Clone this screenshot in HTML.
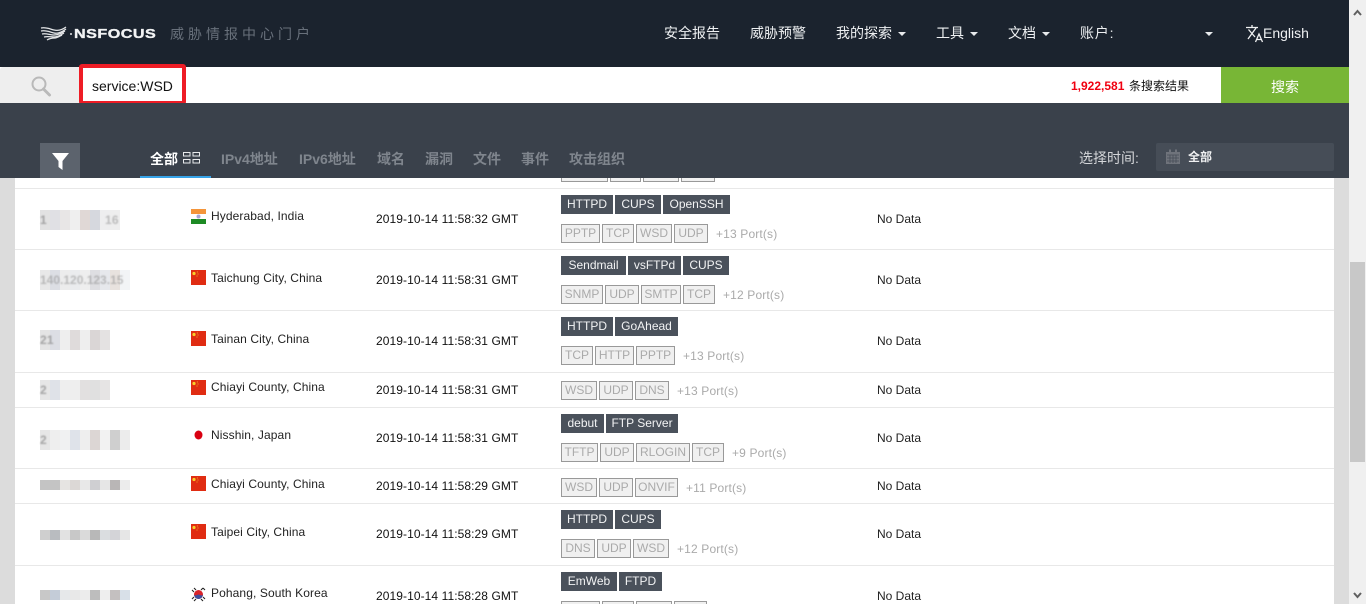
<!DOCTYPE html>
<html lang="zh">
<head>
<meta charset="utf-8">
<title>NSFOCUS</title>
<style>
*{box-sizing:border-box}
html,body{margin:0;padding:0;width:1366px;height:604px;overflow:hidden;background:#fff}
#w{position:relative;width:1366px;height:604px;overflow:hidden;background:#fff;font-family:"Liberation Sans","Noto Sans CJK SC",sans-serif;font-size:12px;color:#222}
.a{position:absolute;white-space:nowrap}
.nav{position:absolute;top:24px;line-height:18px;font-size:14px;color:#eef0f2;white-space:nowrap}
.caret{position:absolute;width:0;height:0;border-left:4px solid transparent;border-right:4px solid transparent;border-top:4px solid #e8eaec;top:32px}
.tab{position:absolute;top:150px;line-height:18px;font-size:14px;font-weight:bold;color:#7f858d;white-space:nowrap}
.line{position:absolute;left:15px;width:1319px;height:1px;background:#e8e8e8}
.ip{position:absolute;height:20px}
.t{position:absolute;font-weight:bold;font-size:12px;line-height:16px;color:#888;filter:blur(.8px);opacity:.7;white-space:nowrap;letter-spacing:.2px}
.loc{position:absolute;left:211px;line-height:16px;color:#222;white-space:nowrap;letter-spacing:.1px}
.dt{position:absolute;left:376px;line-height:16px;color:#111;white-space:nowrap;letter-spacing:.08px}
.nd{position:absolute;left:877px;line-height:16px;color:#222;white-space:nowrap}
.flag{position:absolute;left:191px;width:15px;height:15px}
.tags{position:absolute;left:561px;display:flex;white-space:nowrap}
.d{display:block;flex:none;height:19px;line-height:18px;text-align:center;background:#4a515b;color:#f2f3f4;margin-right:2px}
.g{display:block;flex:none;height:19px;line-height:16px;text-align:center;background:#f0f0f0;border:1px solid #999;color:#aaa;margin-right:2px}
.p{color:#aaa;margin-left:6px;line-height:19px;padding-top:1px;letter-spacing:.15px}
</style>
</head>
<body>
<div id="w">
<!-- content -->
<div class="a" style="left:0;top:178px;width:15px;height:426px;background:#dcdcdc"></div>
<div class="a" style="left:1334px;top:178px;width:15px;height:426px;background:#dcdcdc"></div>

<div class="line" style="top:188px"></div>
<div class="line" style="top:249px"></div>
<div class="line" style="top:310px"></div>
<div class="line" style="top:372px"></div>
<div class="line" style="top:407px"></div>
<div class="line" style="top:468px"></div>
<div class="line" style="top:503px"></div>
<div class="line" style="top:565px"></div>

<!-- row 0 partial -->
<div class="tags" style="top:163px"><span class="g" style="width:47px">&nbsp;</span><span class="g" style="width:31px">&nbsp;</span><span class="g" style="width:36px">&nbsp;</span><span class="g" style="width:34px">&nbsp;</span></div>

<!-- masked addresses -->
<div class="ip" style="left:40px;top:210px;width:80px;background:linear-gradient(90deg,#e2e2e2 0 10px,#e0e0e4 10px 20px,#e8e6e6 20px 30px,#efefef 30px 40px,#e0d8d6 40px 50px,#d6d8de 50px 60px,#eeeeef 60px 70px,#eeeeee 70px 80px)"></div>
<div class="t" style="left:40px;top:212px">1</div><div class="t" style="left:105px;top:212px;opacity:.5">16</div>
<div class="ip" style="left:40px;top:270px;width:90px;background:linear-gradient(90deg,#e8e8e8 0 10px,#dcdee4 10px 20px,#ececec 20px 30px,#eaecee 30px 40px,#eeeeee 40px 50px,#dedee2 50px 60px,#e6e8ec 60px 70px,#e8e2de 70px 80px,#f2f4f6 80px 90px)"></div>
<div class="t" style="left:40px;top:272px;opacity:.5;letter-spacing:0">140.120.123.15</div>
<div class="ip" style="left:40px;top:330px;width:70px;background:linear-gradient(90deg,#e4e4e4 0 10px,#dcdee4 10px 20px,#eeeeee 20px 30px,#dfdbdb 30px 40px,#eeeeee 40px 50px,#dad6d6 50px 60px,#e4e2e2 60px 70px)"></div>
<div class="t" style="left:40px;top:332px">21</div>
<div class="ip" style="left:40px;top:380px;width:70px;background:linear-gradient(90deg,#e6e6e6 0 10px,#dfe2e8 10px 20px,#eeeeee 20px 30px,#eeeeee 30px 40px,#e2e0e0 40px 50px,#e0e0e0 50px 60px,#e6e4e4 60px 70px)"></div>
<div class="t" style="left:40px;top:382px">2</div>
<div class="ip" style="left:40px;top:430px;width:90px;background:linear-gradient(90deg,#e6e6e6 0 10px,#eeeeee 10px 20px,#f0f1f2 20px 30px,#dfe3ea 30px 40px,#eeeeee 40px 50px,#dcd6d4 50px 60px,#f2f2f2 60px 70px,#cfcfcf 70px 80px,#ececec 80px 90px)"></div>
<div class="t" style="left:40px;top:432px">2</div>
<div class="ip" style="left:40px;top:480px;width:90px;height:10px;background:linear-gradient(90deg,#c4c4c4 0 20px,#e6e4e2 20px 30px,#dcd8d6 30px 40px,#e8e8e8 40px 50px,#cfcfd2 50px 60px,#e6e6e6 60px 70px,#b9b6b6 70px 80px,#ececec 80px 90px)"></div>
<div class="ip" style="left:40px;top:530px;width:90px;height:10px;background:linear-gradient(90deg,#cfcfcf 0 10px,#b9bcc0 10px 20px,#e2e2e2 20px 30px,#c8c8c8 30px 40px,#dadada 40px 50px,#b8b8b8 50px 60px,#dadde0 60px 70px,#d4d4d8 70px 80px,#e6e6e6 80px 90px)"></div>
<div class="ip" style="left:40px;top:590px;width:90px;height:10px;background:linear-gradient(90deg,#c8c8c8 0 10px,#c4ccd8 10px 20px,#e6e8ea 20px 30px,#e8e8e8 30px 40px,#ececec 40px 50px,#bdbdbd 50px 60px,#eeeeee 60px 70px,#c4c0c0 70px 80px,#d8e0e8 80px 90px)"></div>

<!-- flags -->
<svg class="flag" style="top:209px" viewBox="0 0 15 15"><rect width="15" height="5" fill="#f4953a"/><rect y="5" width="15" height="5" fill="#fff"/><rect y="10" width="15" height="5" fill="#1d8a24"/><circle cx="7.5" cy="7.5" r="2" fill="#a9a6d6"/></svg>
<svg class="flag" style="top:270px" viewBox="0 0 15 15"><rect width="15" height="15" fill="#e02c12"/><circle cx="3" cy="3.5" r="1.6" fill="#f8d02a"/><circle cx="6.3" cy="2" r=".5" fill="#f8d02a"/><circle cx="7" cy="4" r=".5" fill="#f8d02a"/><circle cx="6" cy="6" r=".5" fill="#f8d02a"/></svg>
<svg class="flag" style="top:331px" viewBox="0 0 15 15"><rect width="15" height="15" fill="#e02c12"/><circle cx="3" cy="3.5" r="1.6" fill="#f8d02a"/><circle cx="6.3" cy="2" r=".5" fill="#f8d02a"/><circle cx="7" cy="4" r=".5" fill="#f8d02a"/><circle cx="6" cy="6" r=".5" fill="#f8d02a"/></svg>
<svg class="flag" style="top:380px" viewBox="0 0 15 15"><rect width="15" height="15" fill="#e02c12"/><circle cx="3" cy="3.5" r="1.6" fill="#f8d02a"/><circle cx="6.3" cy="2" r=".5" fill="#f8d02a"/><circle cx="7" cy="4" r=".5" fill="#f8d02a"/><circle cx="6" cy="6" r=".5" fill="#f8d02a"/></svg>
<svg class="flag" style="top:427px" viewBox="0 0 15 15"><rect width="15" height="15" fill="#fff"/><ellipse cx="7.5" cy="8" rx="4" ry="4.5" fill="#d90011"/></svg>
<svg class="flag" style="top:476px" viewBox="0 0 15 15"><rect width="15" height="15" fill="#e02c12"/><circle cx="3" cy="3.5" r="1.6" fill="#f8d02a"/><circle cx="6.3" cy="2" r=".5" fill="#f8d02a"/><circle cx="7" cy="4" r=".5" fill="#f8d02a"/><circle cx="6" cy="6" r=".5" fill="#f8d02a"/></svg>
<svg class="flag" style="top:524px" viewBox="0 0 15 15"><rect width="15" height="15" fill="#e02c12"/><circle cx="3" cy="3.5" r="1.6" fill="#f8d02a"/><circle cx="6.3" cy="2" r=".5" fill="#f8d02a"/><circle cx="7" cy="4" r=".5" fill="#f8d02a"/><circle cx="6" cy="6" r=".5" fill="#f8d02a"/></svg>
<svg class="flag" style="top:587px" viewBox="0 0 15 15"><rect width="15" height="15" fill="#fff"/><circle cx="7.5" cy="7.5" r="4.5" fill="#d8232a"/><path d="M3 7.5a4.5 4.5 0 0 0 9 0c-1 2-3.4 0-4.500 0S4 9.500 3 7.500z" fill="#3d4f9f"/><path d="M1 3l2 2M3 1l2 2M12 1l2 2M10 3l2-2M1 12l2-2M3 14l2-2M10 12l2 2M12 10l2 2" stroke="#222" stroke-width="1.100"/></svg>

<!-- locations -->
<div class="loc" style="top:208px">Hyderabad, India</div>
<div class="loc" style="top:270px">Taichung City, China</div>
<div class="loc" style="top:331px">Tainan City, China</div>
<div class="loc" style="top:379px">Chiayi County, China</div>
<div class="loc" style="top:427px">Nisshin, Japan</div>
<div class="loc" style="top:476px">Chiayi County, China</div>
<div class="loc" style="top:524px">Taipei City, China</div>
<div class="loc" style="top:585px">Pohang, South Korea</div>

<!-- dates -->
<div class="dt" style="top:211px">2019-10-14 11:58:32 GMT</div>
<div class="dt" style="top:272px">2019-10-14 11:58:31 GMT</div>
<div class="dt" style="top:333px">2019-10-14 11:58:31 GMT</div>
<div class="dt" style="top:382px">2019-10-14 11:58:31 GMT</div>
<div class="dt" style="top:430px">2019-10-14 11:58:31 GMT</div>
<div class="dt" style="top:478px">2019-10-14 11:58:29 GMT</div>
<div class="dt" style="top:526px">2019-10-14 11:58:29 GMT</div>
<div class="dt" style="top:588px">2019-10-14 11:58:28 GMT</div>

<!-- tags -->
<div class="tags" style="top:195px"><span class="d" style="width:52px">HTTPD</span><span class="d" style="width:46px">CUPS</span><span class="d" style="width:67px">OpenSSH</span></div>
<div class="tags" style="top:224px"><span class="g" style="width:39px">PPTP</span><span class="g" style="width:32px">TCP</span><span class="g" style="width:36px">WSD</span><span class="g" style="width:34px">UDP</span><span class="p">+13 Port(s)</span></div>
<div class="tags" style="top:256px"><span class="d" style="width:65px">Sendmail</span><span class="d" style="width:53px">vsFTPd</span><span class="d" style="width:46px">CUPS</span></div>
<div class="tags" style="top:285px"><span class="g" style="width:42px">SNMP</span><span class="g" style="width:34px">UDP</span><span class="g" style="width:40px">SMTP</span><span class="g" style="width:32px">TCP</span><span class="p">+12 Port(s)</span></div>
<div class="tags" style="top:317px"><span class="d" style="width:52px">HTTPD</span><span class="d" style="width:63px">GoAhead</span></div>
<div class="tags" style="top:346px"><span class="g" style="width:32px">TCP</span><span class="g" style="width:39px">HTTP</span><span class="g" style="width:39px">PPTP</span><span class="p">+13 Port(s)</span></div>
<div class="tags" style="top:381px"><span class="g" style="width:36px">WSD</span><span class="g" style="width:34px">UDP</span><span class="g" style="width:34px">DNS</span><span class="p">+13 Port(s)</span></div>
<div class="tags" style="top:414px"><span class="d" style="width:43px">debut</span><span class="d" style="width:72px">FTP Server</span></div>
<div class="tags" style="top:443px"><span class="g" style="width:37px">TFTP</span><span class="g" style="width:34px">UDP</span><span class="g" style="width:54px">RLOGIN</span><span class="g" style="width:32px">TCP</span><span class="p">+9 Port(s)</span></div>
<div class="tags" style="top:478px"><span class="g" style="width:36px">WSD</span><span class="g" style="width:34px">UDP</span><span class="g" style="width:43px">ONVIF</span><span class="p">+11 Port(s)</span></div>
<div class="tags" style="top:510px"><span class="d" style="width:52px">HTTPD</span><span class="d" style="width:46px">CUPS</span></div>
<div class="tags" style="top:539px"><span class="g" style="width:34px">DNS</span><span class="g" style="width:34px">UDP</span><span class="g" style="width:36px">WSD</span><span class="p">+12 Port(s)</span></div>
<div class="tags" style="top:572px"><span class="d" style="width:56px">EmWeb</span><span class="d" style="width:43px">FTPD</span></div>
<div class="tags" style="top:601px"><span class="g" style="width:39px">&nbsp;</span><span class="g" style="width:32px">&nbsp;</span><span class="g" style="width:36px">&nbsp;</span><span class="g" style="width:33px">&nbsp;</span></div>

<!-- no data -->
<div class="nd" style="top:211px">No Data</div>
<div class="nd" style="top:272px">No Data</div>
<div class="nd" style="top:333px">No Data</div>
<div class="nd" style="top:382px">No Data</div>
<div class="nd" style="top:430px">No Data</div>
<div class="nd" style="top:478px">No Data</div>
<div class="nd" style="top:526px">No Data</div>
<div class="nd" style="top:588px">No Data</div>

<!-- header -->
<div class="a" style="left:0;top:0;width:1349px;height:67px;background:#1b232e"></div>
<svg class="a" style="left:40px;top:26px" width="33" height="16" viewBox="0 0 33 16"><g fill="none" stroke="#e4e6e8" stroke-width="1.300"><path d="M1 2c5-1 9 1 13 2s8 0 12-3"/><path d="M1 5c5-1 9 1 13 2s8-1 12-4"/><path d="M2 8c4-1 8 1 12 1s8-2 11-4"/><path d="M4 11c4-1 7 0 10 0s7-2 10-4"/><path d="M7 14c3-2 6-2 8-2s5-2 7-3"/></g><circle cx="31" cy="8" r="1" fill="#e4e6e8"/></svg>
<div class="a" style="left:74px;top:26px;line-height:16px;font-size:13px;font-weight:bold;color:#f2f3f4;letter-spacing:.4px;-webkit-text-stroke:.35px #f2f3f4;transform-origin:0 50%;transform:scaleX(1.240)">NSFOCUS</div>
<div class="a" style="left:170px;top:25px;line-height:18px;font-size:14px;letter-spacing:4px;color:#68707b">威胁情报中心门户</div>

<div class="nav" style="left:664px">安全报告</div>
<div class="nav" style="left:750px">威胁预警</div>
<div class="nav" style="left:836px">我的探索</div><div class="caret" style="left:898px"></div>
<div class="nav" style="left:936px">工具</div><div class="caret" style="left:970px"></div>
<div class="nav" style="left:1008px">文档</div><div class="caret" style="left:1042px"></div>
<div class="nav" style="left:1080px;letter-spacing:.8px">账户:</div><div class="caret" style="left:1205px"></div>
<svg class="a" style="left:1245px;top:24px" width="19" height="19" viewBox="0 0 19 19"><g fill="none" stroke="#f0f1f2" stroke-width="1.300"><path d="M1 3.500h12M7 1v2.500M3 15L11 4M3.500 5.500L10 13"/><path d="M10.500 18l3.500-8 3.500 8M11.800 15.500h4.400"/></g></svg>
<div class="nav" style="left:1263px">English</div>

<!-- search -->
<div class="a" style="left:0;top:67px;width:1349px;height:36px;background:#fff"></div>
<div class="a" style="left:0;top:67px;width:80px;height:36px;background:#eeeeee;border-radius:3px 0 0 0"></div>
<svg class="a" style="left:29px;top:75px" width="24" height="22" viewBox="0 0 24 22"><circle cx="10" cy="9" r="6.500" fill="none" stroke="#b9b9b9" stroke-width="2"/><path d="M14.500 14l6 6" stroke="#b9b9b9" stroke-width="3" stroke-linecap="round"/></svg>
<div class="a" style="left:79px;top:64px;width:107px;height:41px;border:4px solid #ee1c25;border-radius:3px;background:#fff"></div>
<div class="a" style="left:92px;top:77px;line-height:18px;font-size:14px;color:#111">service:WSD</div>
<div class="a" style="left:1071px;top:78px;line-height:16px;font-weight:bold;color:#f00010">1,922,581</div>
<div class="a" style="left:1129px;top:78px;line-height:16px;color:#111">条搜索结果</div>
<div class="a" style="left:1221px;top:67px;width:128px;height:36px;background:#78b636;color:#fff;font-size:14px;line-height:40px;text-align:center">搜索</div>

<!-- toolbar -->
<div class="a" style="left:0;top:103px;width:1349px;height:75px;background:#3a414b"></div>
<div class="a" style="left:40px;top:143px;width:40px;height:35px;background:#5c636d"></div>
<svg class="a" style="left:52px;top:153px" width="17" height="17" viewBox="0 0 17 17"><path d="M0 0h17L10.500 8v9L6.500 14V8z" fill="#fff"/></svg>
<div class="tab" style="left:150px;color:#fff">全部</div>
<svg class="a" style="left:183px;top:152px" width="17" height="12" viewBox="0 0 17 12"><g fill="none" stroke="#e8eaec" stroke-width="1"><rect x=".5" y=".5" width="6.500" height="3.500"/><rect x="10" y=".5" width="6.500" height="3.500"/><rect x=".5" y="7.500" width="6.500" height="3.500"/><rect x="10" y="7.500" width="6.500" height="3.500"/></g></svg>
<div class="a" style="left:140px;top:176px;width:71px;height:2px;background:#36a3e8"></div>
<div class="tab" style="left:221px">IPv4地址</div>
<div class="tab" style="left:299px">IPv6地址</div>
<div class="tab" style="left:377px">域名</div>
<div class="tab" style="left:425px">漏洞</div>
<div class="tab" style="left:473px">文件</div>
<div class="tab" style="left:521px">事件</div>
<div class="tab" style="left:569px">攻击组织</div>
<div class="a" style="left:1079px;top:149px;line-height:18px;font-size:14px;color:#d4d6d9">选择时间:</div>
<div class="a" style="left:1156px;top:143px;width:178px;height:28px;background:#464d57;border-radius:2px"></div>
<svg class="a" style="left:1166px;top:149px" width="14" height="15" viewBox="0 0 14 15"><path d="M0 3h14v12H0z" fill="#6f737b"/><path d="M3 0.500h2v3.500H3zM9 0.500h2v3.500H9z" fill="#6f737b"/><path d="M1 6h12M1 9h12M1 12h12M4 6v8M7 6v8M10 6v8" stroke="#464d57" stroke-width=".8"/></svg>
<div class="a" style="left:1188px;top:149px;line-height:17px;font-size:12px;font-weight:bold;color:#f0f1f2">全部</div>

<!-- scrollbar -->
<div class="a" style="left:1349px;top:0;width:17px;height:604px;background:#f0f0f0"></div>
<div class="a" style="left:1350px;top:262px;width:15px;height:200px;background:#c8c8c8"></div>
<svg class="a" style="left:1353px;top:9px" width="9" height="7" viewBox="0 0 9 7"><path d="M1 6l3.500-4L8 6" fill="none" stroke="#606060" stroke-width="2"/></svg>
<svg class="a" style="left:1353px;top:592px" width="9" height="7" viewBox="0 0 9 7"><path d="M1 1l3.500 4L8 1" fill="none" stroke="#606060" stroke-width="2"/></svg>
</div>
</body>
</html>
